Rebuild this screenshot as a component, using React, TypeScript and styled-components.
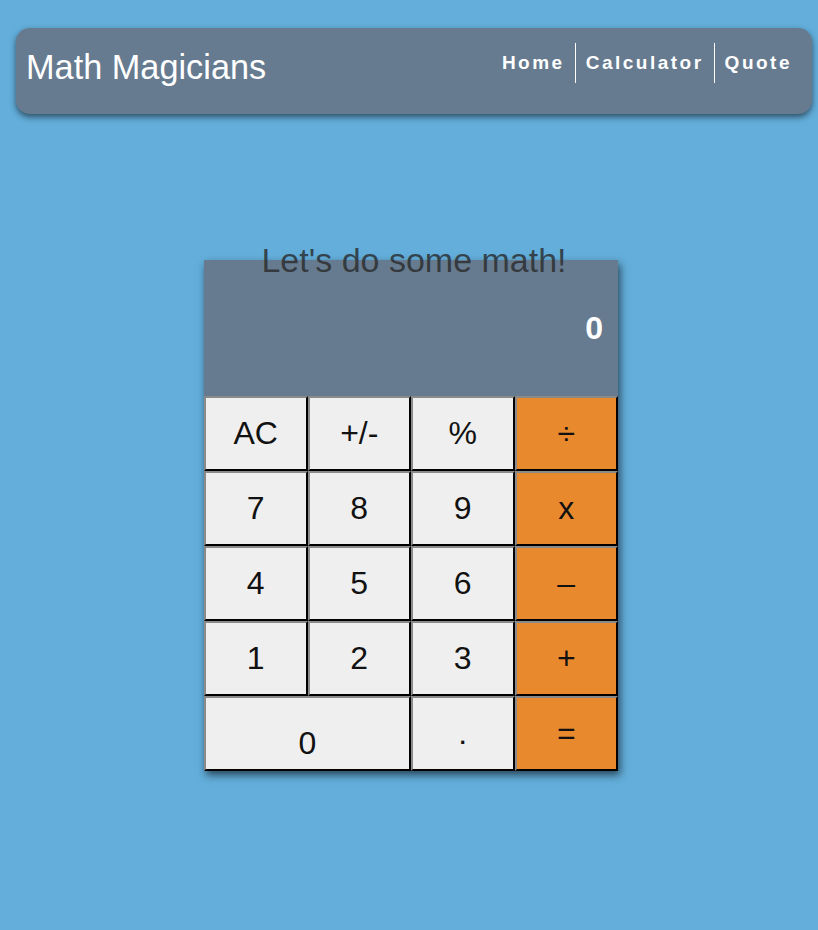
import React from 'react';
import styled, { createGlobalStyle } from 'styled-components';

const GlobalStyle = createGlobalStyle`
  html, body {
    margin: 0;
    padding: 0;
    background: #63aedb;
    font-family: "Liberation Sans", Arial, sans-serif;
  }
`;

const Page = styled.div`
  min-height: 930px;
  padding-top: 28px;
  box-sizing: border-box;
`;

const Header = styled.header`
  display: flex;
  align-items: center;
  justify-content: space-between;
  height: 86px;
  margin: 0 6px 0 16px;
  padding: 0 10px 0 10px;
  box-sizing: border-box;
  background: #667b8f;
  border-radius: 14px;
  box-shadow: 0 3px 6px rgba(0, 0, 0, 0.55);
`;

const Logo = styled.h1`
  margin: 0 0 8px;
  font-size: 34.3px;
  font-weight: 400;
  color: #fff;
`;

const Nav = styled.nav`
  display: flex;
  align-items: stretch;
  margin-bottom: 16px;
`;

const NavLink = styled.a<{ $first?: boolean }>`
  display: flex;
  align-items: center;
  height: 40px;
  padding: 0 10px;
  border-left: ${(p) => (p.$first ? 'none' : '1px solid #fff')};
  color: #fff;
  font-size: 19px;
  font-weight: 700;
  letter-spacing: 2.5px;
  text-decoration: none;
`;

const Main = styled.main`
  display: flex;
  flex-direction: column;
  align-items: center;
  margin-top: 127px;
  padding-left: 4px;
`;

const Heading = styled.h2`
  position: relative;
  z-index: 1;
  margin: 0 0 -20px 6px;
  font-size: 34px;
  font-weight: 400;
  color: rgba(40, 40, 40, 0.78);
`;

const Calculator = styled.div`
  width: 414px;
  display: grid;
  grid-template-columns: repeat(4, 1fr);
  box-shadow: 2px 4px 8px rgba(0, 0, 0, 0.6);
`;

const Display = styled.div`
  grid-column: span 4;
  height: 136px;
  display: flex;
  align-items: center;
  justify-content: flex-end;
  padding-right: 15px;
  background: #667b8f;
  color: #fff;
  font-size: 32px;
  font-weight: 700;
`;

const Key = styled.button<{ $op?: boolean; $wide?: boolean; $low?: boolean }>`
  grid-column: ${(p) => (p.$wide ? 'span 2' : 'span 1')};
  height: 75px;
  padding: ${(p) => (p.$low ? '20px 0 0' : '0')};
  border: 2px outset #8a8a8a;
  border-right-color: #333;
  border-bottom-color: #333;
  background: ${(p) => (p.$op ? '#e8892e' : '#efefef')};
  color: #111;
  font-family: "Liberation Sans", Arial, sans-serif;
  font-size: 32px;
`;

const keys: { label: string; op?: boolean; wide?: boolean; low?: boolean }[] = [
  { label: 'AC' }, { label: '+/-' }, { label: '%' }, { label: '÷', op: true },
  { label: '7' }, { label: '8' }, { label: '9' }, { label: 'x', op: true },
  { label: '4' }, { label: '5' }, { label: '6' }, { label: '–', op: true },
  { label: '1' }, { label: '2' }, { label: '3' }, { label: '+', op: true },
  { label: '0', wide: true, low: true }, { label: '.' }, { label: '=', op: true },
];

const App: React.FC = () => (
  <Page>
    <GlobalStyle />
    <Header>
      <Logo>Math Magicians</Logo>
      <Nav>
        <NavLink $first href="#">Home</NavLink>
        <NavLink href="#">Calculator</NavLink>
        <NavLink href="#">Quote</NavLink>
      </Nav>
    </Header>
    <Main>
      <Heading>Let's do some math!</Heading>
      <Calculator>
        <Display>0</Display>
        {keys.map((k) => (
          <Key key={k.label} type="button" $op={k.op} $wide={k.wide} $low={k.low}>
            {k.label}
          </Key>
        ))}
      </Calculator>
    </Main>
  </Page>
);

export default App;
